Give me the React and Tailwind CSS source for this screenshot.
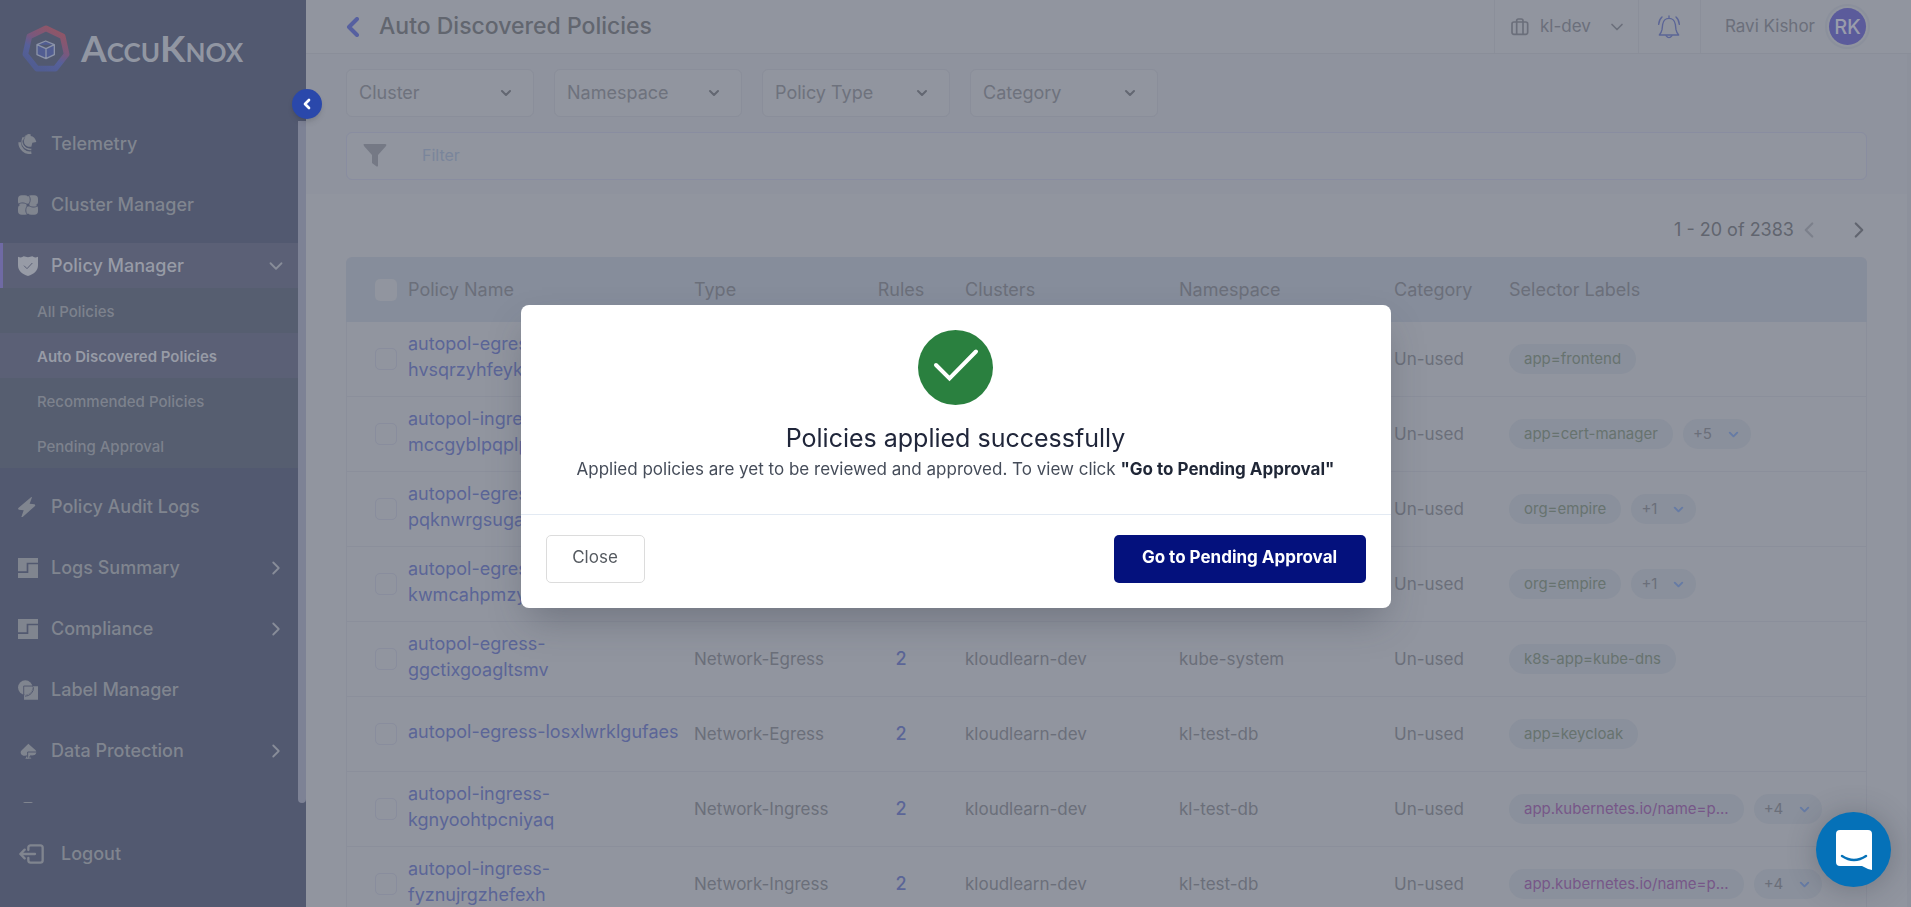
import React from "react";
import { ChevronDown, ChevronLeft, ChevronRight } from "lucide-react";

const TelemetryIcon = () => (
  <svg width="20" height="20" viewBox="0 0 60 60" fill="none">
    <path d="M5 25 A31 31 0 0 0 40 56" stroke="currentColor" strokeWidth="8" />
    <path d="M16 10 C8 26 16 46 40 46" stroke="currentColor" strokeWidth="5" />
    <path d="M18 20 C20 7 28 1 38 1 L38 6 C46 7 53 14 55 24 L43 26 L40 38 C26 40 17 32 18 20 Z" fill="currentColor" />
    <path d="M17 12 C22 5 28 2 35 1" stroke="currentColor" strokeWidth="3" />
    <path d="M15 19 C14 33 24 42 40 42" stroke="#525970" strokeWidth="3" />
  </svg>
);

const ClusterIcon = () => (
  <svg width="21" height="20" viewBox="0 0 64 62" fill="none">
    <rect x="0" y="0" width="34" height="32" rx="12" fill="currentColor" />
    <rect x="30" y="0" width="34" height="32" rx="12" fill="currentColor" />
    <rect x="0" y="30" width="34" height="32" rx="12" fill="currentColor" />
    <rect x="30" y="30" width="34" height="32" rx="12" fill="currentColor" />
    <circle cx="32" cy="31" r="13" fill="currentColor" />
    <g stroke="#525970" strokeWidth="3">
      <path d="M34 0 C42 10 40 22 32 31" />
      <path d="M64 33 C54 40 42 39 32 31" />
      <path d="M30 62 C22 52 24 40 32 31" />
      <path d="M0 29 C10 22 22 23 32 31" />
    </g>
    <circle cx="32" cy="31" r="5" fill="#525970" />
  </svg>
);

const ShieldIcon = () => (
  <svg width="20" height="20" viewBox="0 0 60 60" fill="none">
    <path d="M0 2 C6 5 12 5 17 1 Q30 6 43 1 C48 5 54 5 60 2 V28 C60 44 48 55 30 60 C12 55 0 44 0 28 Z" fill="currentColor" />
    <path d="M18 29 L27 38 L43 21" stroke="#5b6076" strokeWidth="3" />
  </svg>
);

const BoltIcon = () => (
  <svg width="20" height="20" viewBox="0 0 60 60">
    <path d="M40 0 L0 34 L2 38 L17 40 L10 60 L14 60 L52 26 L50 22 L35 20 L42 1 Z" fill="currentColor" />
  </svg>
);

const BlocksIcon = () => (
  <svg width="20" height="20" viewBox="0 0 60 60">
    <path d="M0 0 H60 V14 H26 V40 H0 Z M60 19 V60 H0 V45 H31 V19 Z" fill="currentColor" />
  </svg>
);

const LabelIcon = () => (
  <svg width="21" height="20" viewBox="0 0 63 61" fill="none">
    <path d="M46 19 H63 V61 H19 V46 A24 24 0 0 0 46 19 Z" fill="currentColor" />
    <circle cx="23" cy="23" r="23" fill="currentColor" />
    <path d="M18 48 V18 H48" stroke="#525970" strokeWidth="3" />
    <path d="M49 22 A27 27 0 0 1 22 50" stroke="#525970" strokeWidth="3" />
  </svg>
);

const SpadeIcon = () => (
  <svg width="20" height="20" viewBox="0 0 60 60" fill="none">
    <path d="M31 8 L53 28 C58 36 52 43 45 44 C42 44 38 44 36 44 L40 53 H22 L28 43 C20 46 9 44 8 35 C8 31 10 29 12 27 Z" fill="currentColor" />
    <path d="M29 50 V33 H55 M36 52 V45 H50" stroke="#525970" strokeWidth="3" />
  </svg>
);

const DatabaseIcon = () => (
  <svg width="20" height="20" viewBox="0 0 20 20" fill="none">
    <rect x="5" y="0" width="10" height="18" rx="2" fill="currentColor" />
  </svg>
);

const LogoutIcon = () => (
  <svg width="25" height="20" viewBox="0 0 75 60" fill="none" stroke="currentColor" strokeWidth="7" strokeLinecap="round" strokeLinejoin="round">
    <path d="M28 18 V11 Q28 4 35 4 H64 Q71 4 71 11 V49 Q71 56 64 56 H35 Q28 56 28 49 V42" />
    <path d="M48 30 H5 M17 17 L4 30 L17 43" />
  </svg>
);

const LuggageIcon = () => (
  <svg width="18" height="18" viewBox="0 0 54 54" fill="none" stroke="currentColor" strokeWidth="5">
    <rect x="3" y="12" width="47" height="37" rx="6" />
    <path d="M17 49 V8 Q17 3 22 3 H31 Q36 3 36 8 V49" />
  </svg>
);

const BellIcon = () => (
  <svg width="22" height="24" viewBox="0 0 66 72" fill="none" stroke="currentColor" strokeWidth="4" strokeLinecap="round" strokeLinejoin="round">
    <path d="M33 3 V10 M4 60 H62 C57 54 55 50 54 44 L52 28 C50 16 43 10 33 10 C23 10 16 16 14 28 L12 44 C11 50 9 54 4 60 Z" />
    <path d="M24 62 Q33 74 42 62" />
    <path d="M12 6 Q3 14 2 28 M54 6 Q63 14 64 28" />
  </svg>
);

const FunnelIcon = () => (
  <svg width="24" height="24" viewBox="0 0 24 24">
    <path d="M1 1 H22 Q24 1 23 3 L15 12 V23 Q14 24 13 23 L9 20 V12 L1 3 Q0 1 1 1 Z" fill="currentColor" />
  </svg>
);

const LogoMark = () => (
  <svg width="50" height="50" viewBox="0 0 150 150" fill="none" strokeLinejoin="round">
    <defs>
      <linearGradient id="ring" x1="110" y1="20" x2="50" y2="130" gradientUnits="userSpaceOnUse">
        <stop offset="0" stopColor="#905667" />
        <stop offset="0.4" stopColor="#79587d" />
        <stop offset="0.65" stopColor="#56609a" />
        <stop offset="1" stopColor="#515d92" />
      </linearGradient>
    </defs>
    <path d="M75 13 L125 37 L137 91 L103 134 H48 L13 91 L25 37 Z" stroke="url(#ring)" strokeWidth="17" />
    <path d="M74 51 L100 62 V92 L75 104 L48 92 V62 Z M48 62 L75 74 L100 62 M75 74 V104" fill="#515d92" stroke="#8b93a8" strokeWidth="4" />
  </svg>
);

const navBefore = [
  { label: "Telemetry", icon: TelemetryIcon },
  { label: "Cluster Manager", icon: ClusterIcon },
];
const subItems = [
  { label: "All Policies" },
  { label: "Auto Discovered Policies", active: true },
  { label: "Recommended Policies" },
  { label: "Pending Approval" },
];
const navAfter = [
  { label: "Policy Audit Logs", icon: BoltIcon },
  { label: "Logs Summary", icon: BlocksIcon, more: true },
  { label: "Compliance", icon: BlocksIcon, more: true },
  { label: "Label Manager", icon: LabelIcon },
  { label: "Data Protection", icon: SpadeIcon, more: true },
];

const rows = [
  { name: "autopol-egress-hvsqrzyhfeykmwt", type: "Network-Egress", ns: "default", label: "app=frontend" },
  { name: "autopol-ingress-mccgyblpqplpnw", type: "Network-Ingress", ns: "default", label: "app=cert-manager", more: "+5" },
  { name: "autopol-egress-pqknwrgsugawmo", type: "Network-Egress", ns: "default", label: "org=empire", more: "+1" },
  { name: "autopol-egress-kwmcahpmzywmk", type: "Network-Egress", ns: "default", label: "org=empire", more: "+1" },
  { name: "autopol-egress-ggctixgoagltsmv", type: "Network-Egress", ns: "kube-system", label: "k8s-app=kube-dns" },
  { name: "autopol-egress-losxlwrklgufaes", type: "Network-Egress", ns: "kl-test-db", label: "app=keycloak" },
  { name: "autopol-ingress-kgnyoohtpcniyaq", type: "Network-Ingress", ns: "kl-test-db", label: "app.kubernetes.io/name=p...", more: "+4", purple: true },
  { name: "autopol-ingress-fyznujrgzhefexh", type: "Network-Ingress", ns: "kl-test-db", label: "app.kubernetes.io/name=p...", more: "+4", purple: true },
];

function NavItem({ label, icon: Icon, more }) {
  return (
    <a href="#" className="flex h-[45px] shrink-0 items-center gap-[13px] pr-[11px] pl-[18px] text-[#80858f]">
      <span className="flex w-5 justify-center"><Icon /></span>
      <span className="flex-1">{label}</span>
      {more && <ChevronRight size={22} strokeWidth={2} className="text-[#888d99]" />}
    </a>
  );
}

function Sidebar() {
  return (
    <aside className="relative z-10 flex w-[306px] shrink-0 flex-col bg-[#525970] text-[18px] font-medium">
      <div className="flex h-[121px] shrink-0 items-start gap-2.5 pl-[21px] pt-6">
        <LogoMark />
        <div className="pt-1 font-['Lato',sans-serif] text-[37px] leading-10 font-bold text-[#9196a2]">
          A<span className="text-[26px]">CCU</span>K<span className="text-[26px]">NOX</span>
        </div>
      </div>
      <div className="flex min-h-0 flex-1 overflow-hidden">
        <nav className="flex flex-1 flex-col gap-4 overflow-hidden">
          {navBefore.map((item) => <NavItem key={item.label} {...item} />)}
          <div className="shrink-0">
            <a href="#" className="flex h-[45px] items-center gap-[13px] border-l-[3px] border-[#6f6aa4] bg-[#5b6076] pr-[11px] pl-[15px] text-[#979ba6]">
              <ShieldIcon />
              <span className="flex-1">Policy Manager</span>
              <ChevronDown size={22} strokeWidth={2} className="text-[#888d99]" />
            </a>
            <ul className="bg-[#565e70] text-[15px]">
              {subItems.map((s) => (
                <li key={s.label}>
                  <a
                    href="#"
                    className={
                      s.active
                        ? "flex h-[45px] items-center bg-[#5b6076] pt-[3px] pl-[37px] font-semibold text-[#979ba6]"
                        : "flex h-[45px] items-center pt-[3px] pl-[37px] text-[#7d828d]"
                    }
                  >
                    {s.label}
                  </a>
                </li>
              ))}
            </ul>
          </div>
          {navAfter.map((item) => <NavItem key={item.label} {...item} />)}
          <a href="#" aria-label="More" className="flex h-[45px] shrink-0 items-center pl-[18px] text-[#80858f]">
            <DatabaseIcon />
          </a>
        </nav>
        <div className="w-2 rounded-b-full bg-[#7d8295]" />
      </div>
      <div className="h-[104px] shrink-0 pt-7">
        <a href="#" className="flex h-[45px] items-center gap-[17px] pl-[19px] text-[#80858f]">
          <LogoutIcon />
          Logout
        </a>
      </div>
      <button aria-label="Collapse menu" className="absolute top-[89px] -right-4 flex size-[30px] items-center justify-center rounded-full bg-[#2a48ab] text-white shadow-md">
        <ChevronLeft size={16} strokeWidth={4} />
      </button>
    </aside>
  );
}

function TopBar() {
  return (
    <header className="flex h-[54px] shrink-0 items-center border-b border-[#8a8e99] bg-[#91959f] pl-10 text-[#6b6f7b]">
      <a href="#" aria-label="Back" className="mr-5 text-[#5660a0]">
        <svg width="13" height="20" viewBox="0 0 13 20" fill="none" stroke="currentColor" strokeWidth="4" strokeLinecap="round" strokeLinejoin="round">
          <path d="M11 2 L3 10 L11 18" />
        </svg>
      </a>
      <h1 className="flex-1 text-[23px] font-medium text-[#62666f]">Auto Discovered Policies</h1>
      <button className="flex h-full w-[144px] items-center border-l border-[#8b8f9a] pl-4 text-[17px]">
        <LuggageIcon />
        <span className="ml-[11px] flex-1 text-left">kl-dev</span>
        <ChevronDown size={20} strokeWidth={2} className="mr-[11px]" />
      </button>
      <button aria-label="Notifications" className="flex h-full w-[63px] items-center justify-center border-x border-[#8b8f9a] text-[#5b6596]">
        <BellIcon />
      </button>
      <div className="flex items-center gap-2.5 pr-[41px] pl-6 text-[17px]">
        Ravi Kishor
        <span className="rounded-full border-2 border-[#8b909c] p-0.5">
          <span className="flex size-[37px] items-center justify-center rounded-full bg-[#5b5b9b] text-[20px] font-medium text-[#999cab]">RK</span>
        </span>
      </div>
    </header>
  );
}

function Filters() {
  return (
    <section className="shrink-0 bg-[#8f939e] px-10 pt-[15px] pb-3.5">
      <div className="flex gap-5">
        {["Cluster", "Namespace", "Policy Type", "Category"].map((f) => (
          <div key={f} className="relative w-[188px]">
            <select aria-label={f} className="h-12 w-full appearance-none rounded-md border border-[#8a8e9a] bg-[#91959f] pb-0.5 pl-3 text-[18px] text-[#6e727d]">
              <option>{f}</option>
            </select>
            <ChevronDown size={16} strokeWidth={3} className="pointer-events-none absolute top-4 right-5 text-[#636772]" />
          </div>
        ))}
      </div>
      <div className="mt-[15px] flex h-12 items-center gap-[35px] rounded-md border border-[#898da0] bg-[#91959f] pb-0.5 pl-4 text-[#757985]">
        <FunnelIcon />
        <input aria-label="Filter" placeholder="Filter" className="flex-1 bg-transparent text-[16px] outline-none placeholder:text-[#7a859b]" />
      </div>
    </section>
  );
}

function Box({ id, header }) {
  return (
    <input
      id={id}
      type="checkbox"
      aria-label={header ? "Select all policies" : "Select policy"}
      className={
        header
          ? "block size-[22px] appearance-none rounded-[5px] bg-[#91959f]"
          : "block size-[22px] appearance-none rounded-[5px] border border-[#898d9d]"
      }
    />
  );
}

function PolicyTable() {
  return (
    <div className="px-10">
      <table className="w-full table-fixed border-separate border-spacing-0 text-left text-[18px] leading-[26px] text-[#6b6f7a]">
        <colgroup>
          <col className="w-[54px]" />
          <col className="w-[286px]" />
          <col className="w-[176px]" />
          <col className="w-[78px]" />
          <col className="w-[231px]" />
          <col className="w-[215px]" />
          <col className="w-[115px]" />
          <col />
        </colgroup>
        <thead>
          <tr className="h-[65px] bg-[#868d9b]">
            <th className="rounded-tl-md pl-[29px]"><Box id="all" header /></th>
            <th className="px-2 font-normal">Policy Name</th>
            <th className="px-2 font-normal">Type</th>
            <th className="text-center font-normal">Rules</th>
            <th className="pl-[25px] font-normal">Clusters</th>
            <th className="px-2 font-normal">Namespace</th>
            <th className="px-2 font-normal">Category</th>
            <th className="rounded-tr-md px-2 font-normal">Selector Labels</th>
          </tr>
        </thead>
        <tbody className="text-[17px] [&_td]:border-b [&_td]:border-[#8b8f9b]">
          {rows.map((r, i) => (
            <tr key={r.name} className="h-[75px] bg-[#91959f]">
              <td className="border-l pl-7"><Box id={"row-" + i} /></td>
              <td className="pr-1 pb-1 pl-2 text-[18px]"><a href="#" className="text-[#5b6597]">{r.name}</a></td>
              <td className="pl-2">{r.type}</td>
              <td className="text-center text-[18px]"><a href="#" className="font-medium text-[#5b6597]">2</a></td>
              <td className="pl-[25px]">kloudlearn-dev</td>
              <td className="px-2">{r.ns}</td>
              <td className="pl-2">Un-used</td>
              <td className="border-r pl-2">
                <div className="flex gap-2.5 text-[15px]">
                  <span className={r.purple ? "flex h-[30px] items-center rounded-full bg-[#8a909c] px-[15px] whitespace-nowrap text-[#775788]" : "flex h-[30px] items-center rounded-full bg-[#8a909c] px-[15px] whitespace-nowrap text-[#67736f]"}>
                    {r.label}
                  </span>
                  {r.more && (
                    <button className="flex h-[30px] items-center gap-3.5 rounded-full bg-[#8a909c] pr-2.5 pl-2.5 text-[#6b6f7a]">
                      {r.more}
                      <ChevronDown size={15} strokeWidth={3} className="text-[#667ba5]" />
                    </button>
                  )}
                </div>
              </td>
            </tr>
          ))}
        </tbody>
      </table>
    </div>
  );
}

function SuccessDialog() {
  return (
    <div className="fixed inset-0 z-20 flex items-center justify-center pt-1.5">
      <div role="dialog" aria-labelledby="dialog-title" className="w-[870px] rounded-lg bg-white shadow-[0_18px_36px_-8px_rgba(50,54,68,0.35)]">
        <div className="flex flex-col items-center px-6 pt-[25px] pb-8 text-center">
          <svg width="75" height="75" viewBox="0 0 75 75" fill="none">
            <circle cx="37.5" cy="37.5" r="37.5" fill="#2a803f" />
            <path d="M18 35 L31.500 48.500 L58 21.500" stroke="#fff" strokeWidth="4" strokeLinecap="round" />
          </svg>
          <h2 id="dialog-title" className="mt-[15px] text-[25px] leading-9 text-[#20263a]">Policies applied successfully</h2>
          <p className="text-[17px] leading-[26px] text-[#454c59]">
            Applied policies are yet to be reviewed and approved. To view click{" "}
            <strong className="font-bold text-[#1f2636]">"Go to Pending Approval"</strong>
          </p>
        </div>
        <div className="flex justify-between border-t border-[#e3eaf3] px-[25px] pt-5 pb-[25px] text-[17px]">
          <button className="h-12 w-[99px] rounded-[5px] border border-[#dcdcdc] pb-0.5 text-[#555a60]">Close</button>
          <button className="h-12 w-[252px] rounded-[5px] bg-[#04117d] pb-0.5 font-bold text-white">Go to Pending Approval</button>
        </div>
      </div>
    </div>
  );
}

export default function App() {
  return (
    <div className="flex h-screen overflow-hidden bg-[#91959f] font-['Inter',sans-serif]">
      <Sidebar />
      <div className="flex min-w-0 flex-1 flex-col overflow-hidden">
        <TopBar />
        <div className="flex min-h-0 flex-1">
          <main className="min-w-0 flex-1 overflow-hidden">
            <Filters />
            <div className="flex h-[63px] items-center justify-end pt-2 pr-[35px] text-[18px] text-[#61656f]">
              1 - 20 of 2383
              <button aria-label="Previous page" className="ml-0.5 text-[#7c808b]"><ChevronLeft size={26} /></button>
              <button aria-label="Next page" className="ml-6 text-[#61656f]"><ChevronRight size={26} /></button>
            </div>
            <PolicyTable />
          </main>
          <div className="w-1 bg-[#8d919c]" />
        </div>
      </div>
      <SuccessDialog />
      <button aria-label="Open chat" className="fixed right-5 bottom-5 z-30 flex size-[75px] items-center justify-center rounded-full bg-[#0571b8] shadow-[0_2px_30px_rgba(40,45,60,0.3)]">
        <svg width="36" height="40" viewBox="0 0 36 40" fill="none">
          <path d="M4 0 H32 Q36 0 36 4 V40 Q31 39 26 36 H4 Q0 36 0 32 V4 Q0 0 4 0 Z" fill="#fff" />
          <path d="M6 26 Q18 34 30 26" stroke="#0571b8" strokeWidth="2.500" strokeLinecap="round" />
        </svg>
      </button>
    </div>
  );
}
